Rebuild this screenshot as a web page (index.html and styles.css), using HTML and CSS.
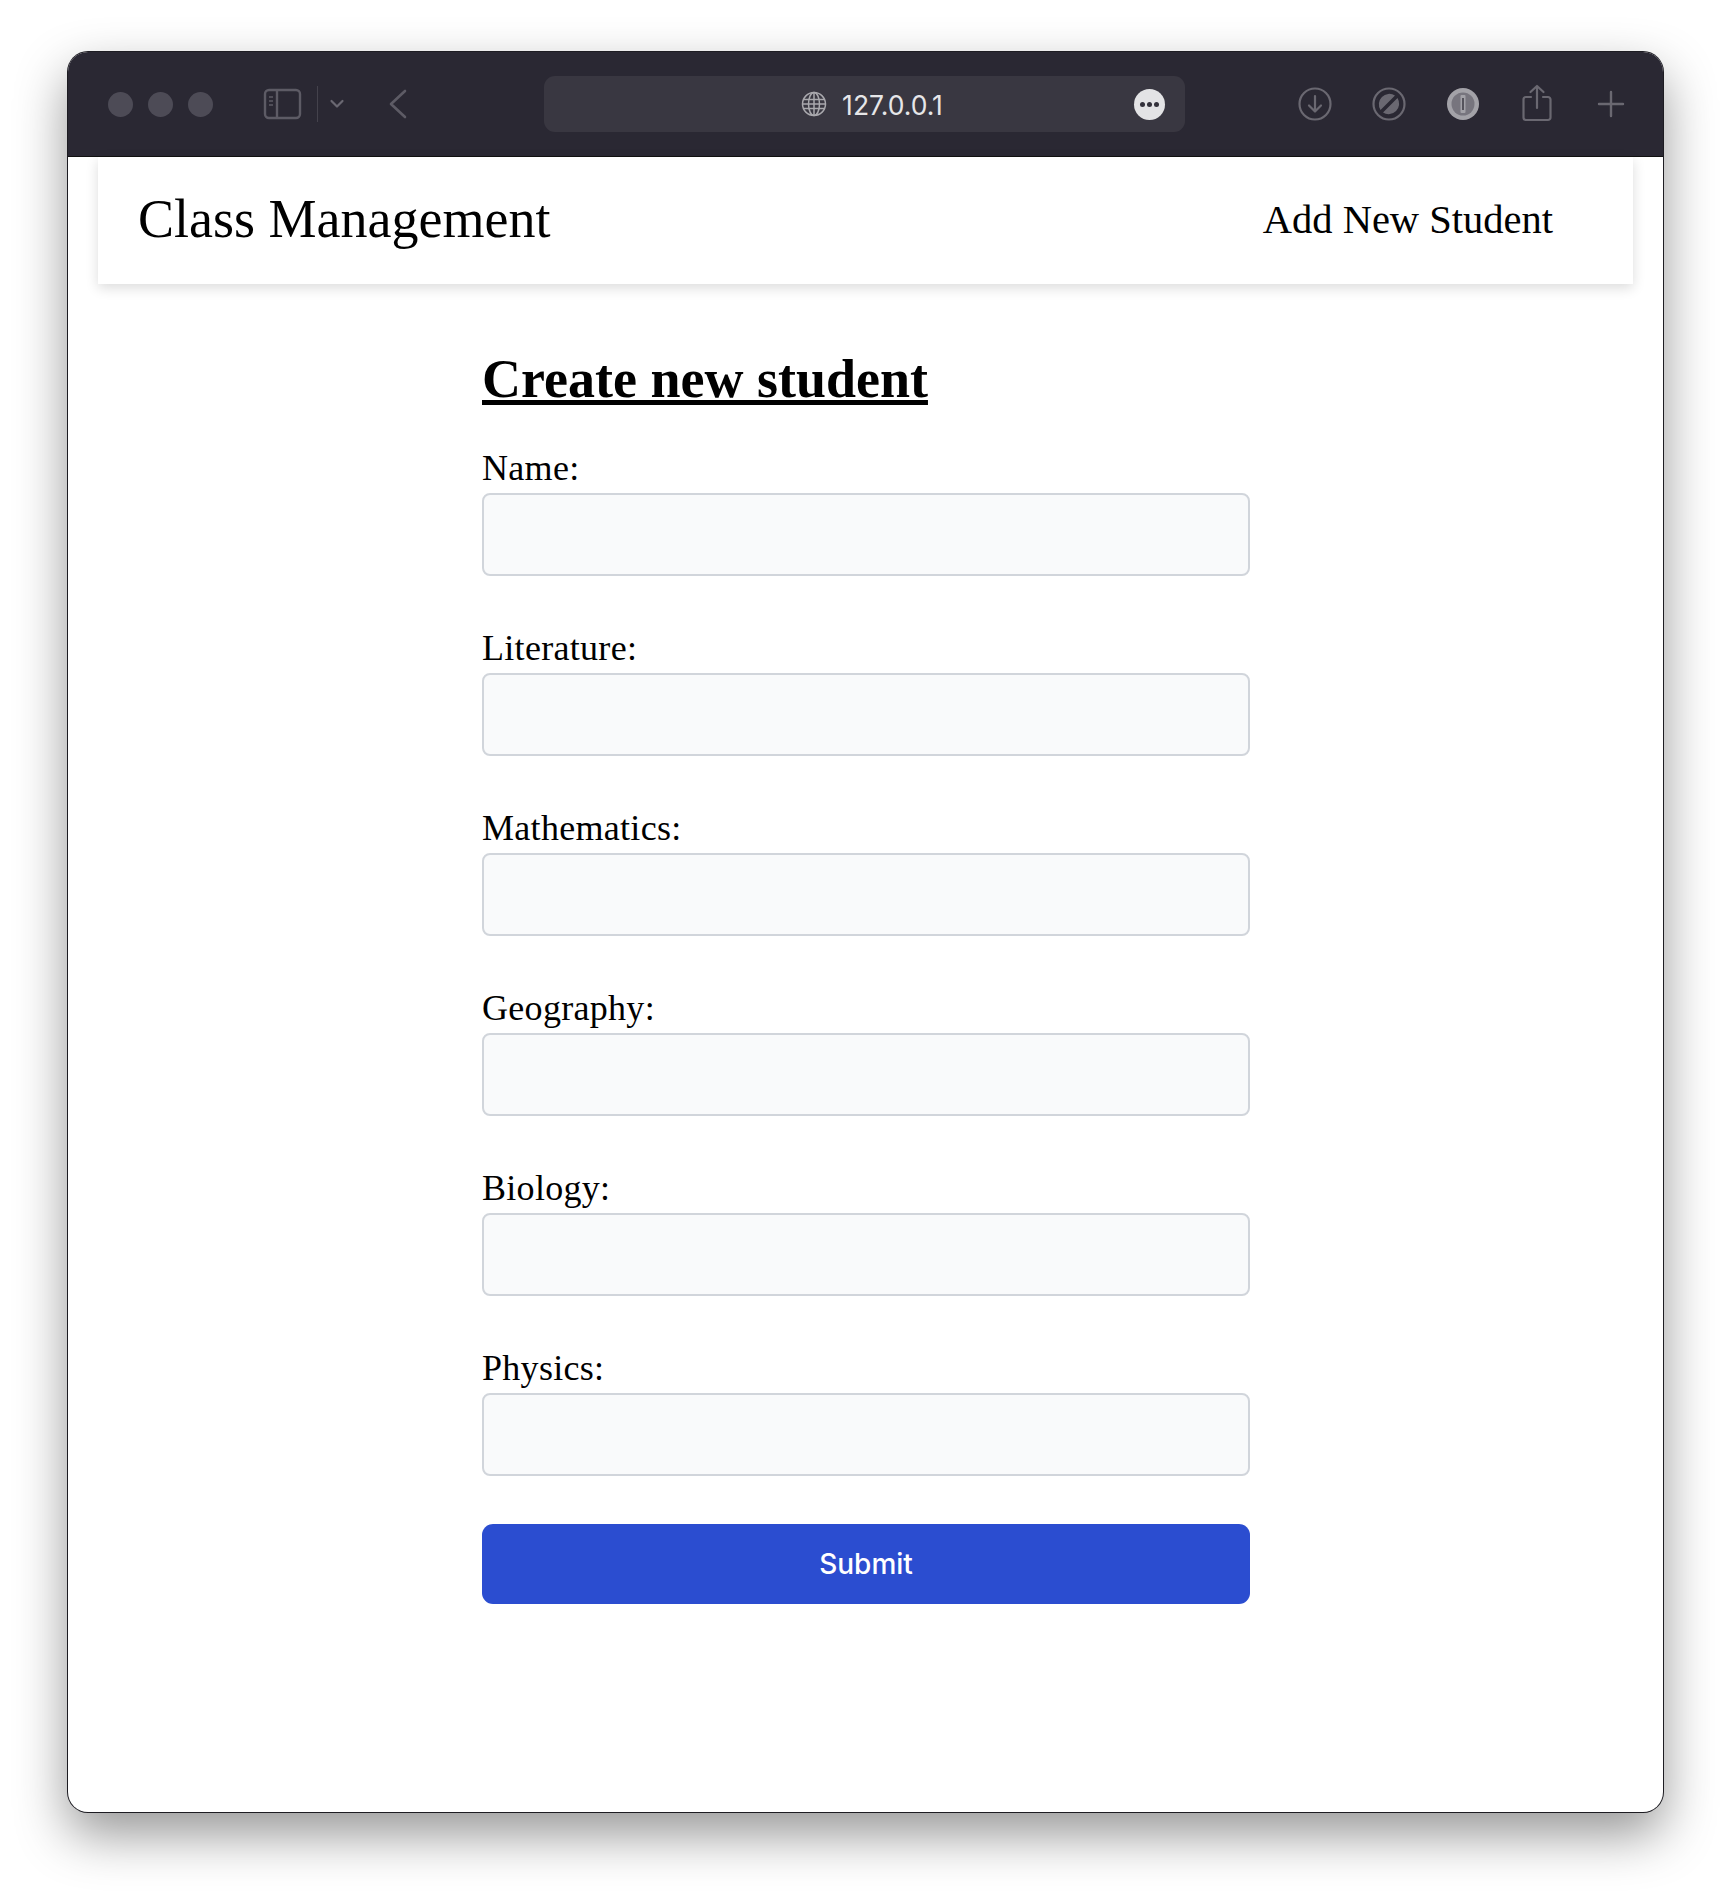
FILE: index.html
```html
<!DOCTYPE html>
<html lang="en">
<head>
  <meta charset="UTF-8" />
  <title>Class Management</title>
  <link rel="stylesheet" href="styles.css">
</head>
<body>
  <div class="window">
    <div class="toolbar">
      <div class="lights">
        <span class="light"></span>
        <span class="light"></span>
        <span class="light"></span>
      </div>
      <svg class="icon-sidebar" width="40" height="32" viewBox="0 0 40 32" fill="none" stroke="#5d5b65" stroke-width="2.4">
        <rect x="2" y="2" width="35" height="28" rx="4" />
        <path d="M14 2v28" />
        <path d="M6 9h4M6 13h4M6 17h4" stroke-width="1.6" />
      </svg>
      <span class="divider"></span>
      <svg class="icon-chevron" width="16" height="10" viewBox="0 0 16 10" fill="none" stroke="#6a6872" stroke-width="2.2" stroke-linecap="round" stroke-linejoin="round">
        <path d="M2.5 2l5.5 5.5L13.500 2" />
      </svg>
      <svg class="icon-back" width="20" height="32" viewBox="0 0 20 32" fill="none" stroke="#5d5b65" stroke-width="2.6" stroke-linecap="round" stroke-linejoin="round">
        <path d="M17 3L3 16l14 13" />
      </svg>

      <div class="address">
        <div class="address-center">
          <svg width="26" height="26" viewBox="0 0 26 26" fill="none" stroke="#a9a8ad" stroke-width="1.5">
            <circle cx="13" cy="13" r="11.500" />
            <ellipse cx="13" cy="13" rx="5.500" ry="11.500" />
            <path d="M13 1.500v23M2.500 8.500h21M1.500 13h23M2.500 17.500h21" />
          </svg>
          <span class="url">127.0.0.1</span>
        </div>
        <span class="more"><i></i><i></i><i></i></span>
      </div>

      <div class="tools">
        <span class="tool">
          <svg width="36" height="36" viewBox="0 0 36 36" fill="none" stroke="#6a6871" stroke-width="2.2" stroke-linecap="round" stroke-linejoin="round">
            <circle cx="18" cy="18" r="15.500" />
            <path d="M18 10v15M12 19.500l6 6 6-6" />
          </svg>
        </span>
        <span class="tool">
          <svg width="36" height="36" viewBox="0 0 36 36" fill="none" stroke="#6a6871" stroke-width="2.2">
            <circle cx="18" cy="18" r="15.500" />
            <path d="M24 9.500a10.500 10.500 0 0 0-14.500 14.500zM12 26.500a10.500 10.500 0 0 0 14.500-14.500z" fill="#6a6871" stroke="none" />
          </svg>
        </span>
        <span class="tool">
          <svg width="36" height="36" viewBox="0 0 36 36">
            <circle cx="18" cy="18" r="16" fill="#a3a2a8" />
            <circle cx="18" cy="18" r="11.500" fill="#77757e" />
            <rect x="15.500" y="9" width="5" height="18" rx="1" fill="#a3a2a8" />
            <rect x="17" y="12" width="2" height="12" fill="#55535c" />
          </svg>
        </span>
        <span class="tool tool-share">
          <svg width="30" height="38" viewBox="0 0 30 38" fill="none" stroke="#6a6871" stroke-width="2.2" stroke-linecap="round" stroke-linejoin="round">
            <path d="M9 13H4a2.500 2.500 0 0 0-2.500 2.500v18A2.500 2.500 0 0 0 4 36h22a2.500 2.500 0 0 0 2.500-2.500v-18A2.500 2.500 0 0 0 26 13h-5" />
            <path d="M15 24V2M8.500 8L15 2l6.500 6" />
          </svg>
        </span>
        <span class="tool">
          <svg width="28" height="28" viewBox="0 0 28 28" fill="none" stroke="#6a6871" stroke-width="2.4" stroke-linecap="round">
            <path d="M14 2v24M2 14h24" />
          </svg>
        </span>
      </div>
    </div>

    <div class="page">
      <nav class="navbar">
        <a class="brand" href="#">Class Management</a>
        <a class="nav-link" href="#">Add New Student</a>
      </nav>

      <form class="student-form">
        <h2 class="form-title">Create new student</h2>

        <label class="field">
          <span>Name:</span>
          <input type="text" />
        </label>
        <label class="field">
          <span>Literature:</span>
          <input type="text" />
        </label>
        <label class="field">
          <span>Mathematics:</span>
          <input type="text" />
        </label>
        <label class="field">
          <span>Geography:</span>
          <input type="text" />
        </label>
        <label class="field">
          <span>Biology:</span>
          <input type="text" />
        </label>
        <label class="field">
          <span>Physics:</span>
          <input type="text" />
        </label>

        <button class="btn-submit" type="button">Submit</button>
      </form>
    </div>
  </div>
</body>
</html>
```

FILE: styles.css
```css
body {
  margin: 0;
  padding: 52px 69px 84px 68px;
  background-color: #fff;
  font-family: "Liberation Serif", serif;
  color: #000;
}

.window {
  height: 1760px;
  border-radius: 20px;
  overflow: hidden;
  background-color: #fff;
  box-shadow: 0 0 0 1px #1d1c22, 0 22px 52px rgba(0, 0, 0, 0.42);
  display: flex;
  flex-direction: column;
}

.toolbar {
  height: 105px;
  flex-shrink: 0;
  background-color: #2a2833;
  border-bottom: 1px solid #111;
  box-sizing: border-box;
  display: flex;
  align-items: center;
  padding: 0 34px 0 40px;
}

.lights {
  display: flex;
  gap: 15px;
}

.light {
  width: 25px;
  height: 25px;
  border-radius: 50%;
  background-color: #4d4b56;
}

.icon-sidebar {
  margin-left: 50px;
}

.divider {
  width: 1px;
  height: 36px;
  margin-left: 14px;
  background-color: #44424c;
}

.icon-chevron {
  margin-left: 11px;
}

.icon-back {
  margin-left: 43px;
}

.address {
  width: 641px;
  height: 56px;
  margin-left: 136px;
  padding: 0 20px;
  box-sizing: border-box;
  border-radius: 11px;
  background-color: #393741;
  display: flex;
  align-items: center;
}

.address-center {
  flex: 1;
  display: flex;
  align-items: center;
  justify-content: center;
  gap: 15px;
  padding-left: 46px;
}

.url {
  padding-top: 2px;
  font-family: Inter, sans-serif;
  font-size: 26.5px;
  color: #e6e6e8;
}

.more {
  width: 31px;
  height: 31px;
  border-radius: 50%;
  background-color: #e3e3e5;
  display: flex;
  align-items: center;
  justify-content: center;
  gap: 2px;
}

.more i {
  width: 5px;
  height: 5px;
  border-radius: 50%;
  background-color: #33313b;
}

.tools {
  flex: 1;
  display: flex;
  align-items: center;
  justify-content: flex-end;
  gap: 38px;
}

.tool {
  width: 36px;
  display: flex;
  justify-content: center;
}

.tool-share {
  margin-top: -2px;
}

.page {
  flex: 1;
  padding: 0 30px;
}

.navbar {
  height: 127px;
  padding: 0 80px 3px 40px;
  box-sizing: border-box;
  display: flex;
  align-items: center;
  justify-content: space-between;
  background-color: #fff;
  box-shadow: 0 4px 12px rgba(0, 0, 0, 0.14);
}

.brand {
  font-size: 54px;
  color: #000;
  text-decoration: none;
}

.nav-link {
  font-size: 40.5px;
  color: #000;
  text-decoration: none;
}

.student-form {
  width: 768px;
  margin: 65px 0 0 384px;
}

.form-title {
  margin: 0 0 35px 0;
  font-size: 54px;
  line-height: 60px;
  font-weight: bold;
  text-decoration: underline;
}

.field {
  display: block;
  margin-bottom: 48px;
}

.field span {
  display: block;
  font-size: 36px;
  letter-spacing: 0.3px;
  line-height: 49px;
}

.field input {
  display: block;
  width: 100%;
  height: 83px;
  box-sizing: border-box;
  border: 2px solid #d1d5db;
  border-radius: 8px;
  background-color: #f9fafb;
}

.btn-submit {
  display: block;
  width: 100%;
  height: 80px;
  border: none;
  border-radius: 11px;
  background-color: #2b4dd0;
  color: #fff;
  font-family: Inter, sans-serif;
  font-size: 28px;
  font-weight: 500;
}
```
